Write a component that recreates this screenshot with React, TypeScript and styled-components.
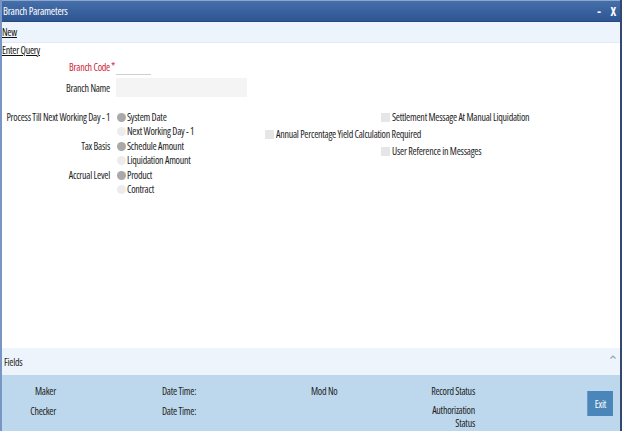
import React from "react";
import styled, { createGlobalStyle } from "styled-components";

const GlobalStyle = createGlobalStyle`
  html, body {
    margin: 0;
    padding: 0;
    background: #ffffff;
  }
  body {
    font-family: "Open Sans", "Liberation Sans", Arial, sans-serif;
    font-stretch: condensed;
    font-size: 10px;
    letter-spacing: -0.25px;
    color: #1e1e1e;
  }
`;

const Page = styled.div`
  width: 623px;
  height: 436px;
  background: #ffffff;
`;

const Window = styled.div`
  width: 622px;
  height: 431px;
  box-sizing: border-box;
  display: flex;
  flex-direction: column;
  border-left: 2px solid #7895c3;
  border-right: 2px solid #33486e;
`;

const TitleBar = styled.div`
  height: 22px;
  flex: none;
  display: flex;
  align-items: center;
  padding: 0 4px 0 1px;
  background: linear-gradient(#456fab, #2d5591);
  border-top: 1px solid #8fa6c8;
  border-bottom: 1px solid #284a7c;
  box-sizing: border-box;
  color: #ffffff;
`;

const Title = styled.span`
  flex: 1;
  font-size: 10.5px;
`;

const WinControl = styled.span`
  font-size: 12px;
  font-weight: bold;
  margin-left: 10px;
`;

const Toolbar = styled.div`
  height: 21px;
  flex: none;
  display: flex;
  align-items: center;
  background: #eef4fc;
  border-bottom: 1px solid #e2eaf4;
  box-sizing: border-box;
`;

const ActionLink = styled.a`
  color: #111111;
  text-decoration: underline;
  line-height: 12px;
  cursor: pointer;
`;

const Body = styled.div`
  flex: 1;
  display: flex;
  flex-direction: column;
  align-items: flex-start;
`;

const QueryLink = styled(ActionLink)`
  margin-top: 1px;
`;

const FieldRow = styled.div<{ $align?: string }>`
  display: grid;
  grid-template-columns: 108px 6px auto;
  align-items: ${(p) => p.$align || "center"};
`;

const Label = styled.span<{ $required?: boolean }>`
  text-align: right;
  white-space: nowrap;
  line-height: 12px;
  color: ${(p) => (p.$required ? "#cc1f36" : "#1e1e1e")};
`;

const Star = styled.span`
  color: #cc1f36;
  font-size: 11px;
  line-height: 10px;
  padding-left: 1px;
`;

const HeaderFields = styled.div`
  display: flex;
  flex-direction: column;
  gap: 3px;
  margin-top: 5px;
`;

const TextInput = styled.div<{ $w: number; $h: number; $filled?: boolean }>`
  width: ${(p) => p.$w}px;
  height: ${(p) => p.$h}px;
  box-sizing: border-box;
  background: ${(p) => (p.$filled ? "#f4f4f4" : "#ffffff")};
  border-bottom: ${(p) => (p.$filled ? "none" : "1px solid #cfcfcf")};
`;

const Options = styled.div`
  display: flex;
  margin-top: 13px;
`;

const RadioSection = styled.div`
  width: 263px;
  display: flex;
  flex-direction: column;
  gap: 1px;
`;

const RadioGroup = styled(FieldRow)`
  align-items: start;
`;

const RadioList = styled.div`
  grid-column: 3;
  display: flex;
  flex-direction: column;
`;

const Choice = styled.div`
  height: 14px;
  display: flex;
  align-items: center;
  white-space: nowrap;
`;

const RadioDot = styled.span<{ $on?: boolean }>`
  width: 9px;
  height: 9px;
  border-radius: 50%;
  margin: 0 1px 0 1px;
  background: ${(p) => (p.$on ? "#a9a9a9" : "#ececec")};
`;

const GroupLabel = styled(Label)`
  line-height: 14px;
`;

const CheckSection = styled.div`
  display: flex;
  flex-direction: column;
  gap: 3px;
`;

const CheckRow = styled.div<{ $indent?: number }>`
  height: 14px;
  display: flex;
  align-items: center;
  white-space: nowrap;
  padding-left: ${(p) => p.$indent || 0}px;
`;

const CheckBox = styled.span`
  width: 9px;
  height: 9px;
  margin-right: 2px;
  background: #e6e6e6;
`;

const FieldsBar = styled.div`
  height: 27px;
  flex: none;
  display: flex;
  align-items: center;
  justify-content: space-between;
  padding: 0 4px 0 2px;
  background: #edf4fc;
  box-sizing: border-box;
`;

const Caret = styled.svg`
  align-self: flex-start;
  margin-top: 7px;
`;

const Footer = styled.div`
  height: 56px;
  flex: none;
  display: grid;
  grid-template-columns: 54px 106px 149px 60px 104px 1fr;
  grid-template-rows: 12px auto;
  row-gap: 8px;
  padding-top: 10px;
  box-sizing: border-box;
  background: #bdd8ec;
  line-height: 12px;
`;

const Cell = styled.span<{ $col: number; $row: number; $right?: boolean }>`
  grid-column: ${(p) => p.$col};
  grid-row: ${(p) => p.$row};
  text-align: ${(p) => (p.$right ? "right" : "left")};
`;

const StatusCell = styled(Cell)`
  line-height: 13px;
  margin-top: -1px;
`;

const ExitButton = styled.button`
  grid-column: 6;
  grid-row: 1 / span 2;
  justify-self: end;
  align-self: start;
  margin: 6px 7px 0 0;
  width: 26px;
  height: 25px;
  padding: 0;
  border: none;
  border-left: 1px solid #6d9bc4;
  background: #4a86b9;
  color: #ffffff;
  font-family: inherit;
  font-stretch: inherit;
  font-size: 10px;
  letter-spacing: -0.25px;
  cursor: pointer;
`;

const radioGroups = [
  { label: "Process Till Next Working Day - 1", options: ["System Date", "Next Working Day - 1"] },
  { label: "Tax Basis", options: ["Schedule Amount", "Liquidation Amount"] },
  { label: "Accrual Level", options: ["Product", "Contract"] },
];

const checks = [
  { text: "Settlement Message At Manual Liquidation", indent: 116 },
  { text: "Annual Percentage Yield Calculation Required", indent: 0 },
  { text: "User Reference in Messages", indent: 116 },
];

export default function App() {
  return (
    <>
      <GlobalStyle />
      <Page>
        <Window>
          <TitleBar>
            <Title>Branch Parameters</Title>
            <WinControl>-</WinControl>
            <WinControl>X</WinControl>
          </TitleBar>
          <Toolbar>
            <ActionLink>New</ActionLink>
          </Toolbar>
          <Body>
            <QueryLink>Enter Query</QueryLink>
            <HeaderFields>
              <FieldRow $align="start">
                <Label $required>Branch Code</Label>
                <Star>*</Star>
                <TextInput $w={35} $h={14} />
              </FieldRow>
              <FieldRow>
                <Label>Branch Name</Label>
                <span />
                <TextInput $w={131} $h={19} $filled />
              </FieldRow>
            </HeaderFields>
            <Options>
              <RadioSection>
                {radioGroups.map((g) => (
                  <RadioGroup key={g.label}>
                    <GroupLabel>{g.label}</GroupLabel>
                    <RadioList>
                      {g.options.map((o, i) => (
                        <Choice key={o}>
                          <RadioDot $on={i === 0} />
                          {o}
                        </Choice>
                      ))}
                    </RadioList>
                  </RadioGroup>
                ))}
              </RadioSection>
              <CheckSection>
                {checks.map((c) => (
                  <CheckRow key={c.text} $indent={c.indent}>
                    <CheckBox />
                    {c.text}
                  </CheckRow>
                ))}
              </CheckSection>
            </Options>
          </Body>
          <FieldsBar>
            <span>Fields</span>
            <Caret width="6" height="4" viewBox="0 0 6 4">
              <polyline points="0.5,3.5 3,1 5.5,3.5" fill="none" stroke="#8ea3bd" strokeWidth="1.2" />
            </Caret>
          </FieldsBar>
          <Footer>
            <Cell $col={1} $row={1} $right>Maker</Cell>
            <Cell $col={3} $row={1}>Date Time:</Cell>
            <Cell $col={4} $row={1}>Mod No</Cell>
            <Cell $col={5} $row={1} $right>Record Status</Cell>
            <Cell $col={1} $row={2} $right>Checker</Cell>
            <Cell $col={3} $row={2}>Date Time:</Cell>
            <StatusCell $col={5} $row={2} $right>Authorization<br />Status</StatusCell>
            <ExitButton>Exit</ExitButton>
          </Footer>
        </Window>
      </Page>
    </>
  );
}
